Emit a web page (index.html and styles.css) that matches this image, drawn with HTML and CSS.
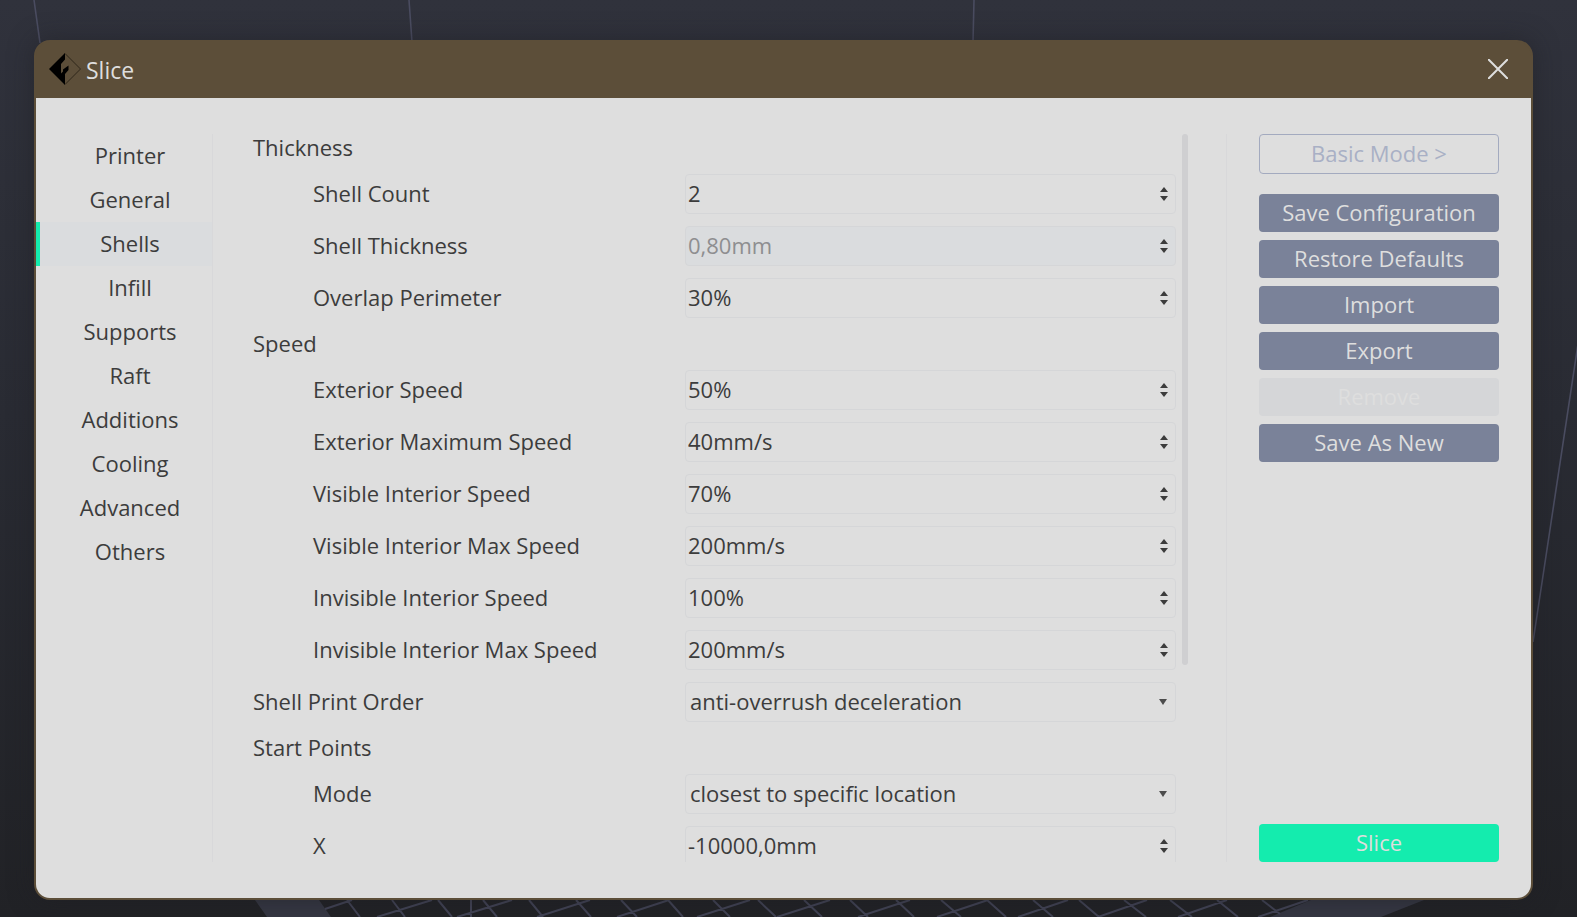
FILE: index.html
```html
<!DOCTYPE html>
<html lang="en">
<head>
<meta charset="utf-8">
<title>Slice</title>
<link rel="stylesheet" href="styles.css">
</head>
<body>
<svg class="scene" viewBox="0 0 1577 917" preserveAspectRatio="none" aria-hidden="true">
  <g fill="#353743">
    <path d="M255 900H319L331 917H267Z"/>
    <path d="M1311 900H1424L1381 917H1270Z"/>
  </g>
  <path fill="none" stroke="#4a4c60" stroke-width="1.6" d="M34 0L40 43M409 0L412 42M974 0L973 42M1578 344L1533 642"/>
  <path fill="none" stroke="#424456" stroke-width="2" d="M347 900l13 17M392 900l13 17M438 900l14 17M483 900l14 17M529 900l14 17M576 900l15 17M621 900l16 17M668 900l15 17M713 900l17 17M758 900l18 17M804 900l18 17M850 900l18 17M896 900l18 17M941 900l20 17M987 900l19 17M1033 900l20 17M1079 900l20 17M1124 900l22 17M1170 900l22 17M1217 900l21 17M1262 900l18 14M471 900v17M325 909L352 900M377 917l55-17M457 917l55-17M537 917l53-17M617 917l52-17M697 917l53-17M777 917l53-17M858 917l52-17M937 917l51-17M1018 917l50-17M1098 917l49-17M1178 917l49-17M1258 917l50-17"/>
</svg>
<main class="dialog">
  <header class="titlebar">
    <svg class="logo" viewBox="0 0 32 32" aria-hidden="true">
      <path d="M16 .5L31.500 16L16 31.500" fill="none" stroke="#2e261b" stroke-width="1"/>
      <path d="M16 0V6.500L12 11V20.500L14 18.500V16.500L19.500 12.500V17L16 21V32L0 16Z"/>
    </svg>
    <h1 class="title">Slice</h1>
    <button class="close" type="button" aria-label="Close">
      <svg viewBox="0 0 20 20"><path d="M.8 .8L19.200 19.200M19.200 .8L.8 19.200" fill="none" stroke="#dedede" stroke-width="2" stroke-linecap="round"/></svg>
    </button>
  </header>
  <div class="content">
    <nav class="tabs">
      <button type="button" class="tab">Printer</button>
      <button type="button" class="tab">General</button>
      <button type="button" class="tab active" aria-current="page">Shells</button>
      <button type="button" class="tab">Infill</button>
      <button type="button" class="tab">Supports</button>
      <button type="button" class="tab">Raft</button>
      <button type="button" class="tab">Additions</button>
      <button type="button" class="tab">Cooling</button>
      <button type="button" class="tab">Advanced</button>
      <button type="button" class="tab">Others</button>
    </nav>
    <form class="settings">
      <h2 class="group">Thickness</h2>
      <div class="row sub"><label for="count">Shell Count</label><span class="field"><input id="count" value="2"><span class="spin"><button type="button" class="up" aria-label="Increase"></button><button type="button" class="down" aria-label="Decrease"></button></span></span></div>
      <div class="row sub"><label for="thick">Shell Thickness</label><span class="field disabled"><input id="thick" value="0,80mm" disabled><span class="spin"><button type="button" class="up" aria-label="Increase"></button><button type="button" class="down" aria-label="Decrease"></button></span></span></div>
      <div class="row sub"><label for="overlap">Overlap Perimeter</label><span class="field"><input id="overlap" value="30%"><span class="spin"><button type="button" class="up" aria-label="Increase"></button><button type="button" class="down" aria-label="Decrease"></button></span></span></div>
      <h2 class="group">Speed</h2>
      <div class="row sub"><label for="ext">Exterior Speed</label><span class="field"><input id="ext" value="50%"><span class="spin"><button type="button" class="up" aria-label="Increase"></button><button type="button" class="down" aria-label="Decrease"></button></span></span></div>
      <div class="row sub"><label for="extmax">Exterior Maximum Speed</label><span class="field"><input id="extmax" value="40mm/s"><span class="spin"><button type="button" class="up" aria-label="Increase"></button><button type="button" class="down" aria-label="Decrease"></button></span></span></div>
      <div class="row sub"><label for="vis">Visible Interior Speed</label><span class="field"><input id="vis" value="70%"><span class="spin"><button type="button" class="up" aria-label="Increase"></button><button type="button" class="down" aria-label="Decrease"></button></span></span></div>
      <div class="row sub"><label for="vismax">Visible Interior Max Speed</label><span class="field"><input id="vismax" value="200mm/s"><span class="spin"><button type="button" class="up" aria-label="Increase"></button><button type="button" class="down" aria-label="Decrease"></button></span></span></div>
      <div class="row sub"><label for="inv">Invisible Interior Speed</label><span class="field"><input id="inv" value="100%"><span class="spin"><button type="button" class="up" aria-label="Increase"></button><button type="button" class="down" aria-label="Decrease"></button></span></span></div>
      <div class="row sub"><label for="invmax">Invisible Interior Max Speed</label><span class="field"><input id="invmax" value="200mm/s"><span class="spin"><button type="button" class="up" aria-label="Increase"></button><button type="button" class="down" aria-label="Decrease"></button></span></span></div>
      <div class="row"><label for="order">Shell Print Order</label><span class="field"><select id="order"><option>anti-overrush deceleration</option></select><span class="caret"></span></span></div>
      <h2 class="group">Start Points</h2>
      <div class="row sub"><label for="mode">Mode</label><span class="field"><select id="mode"><option>closest to specific location</option></select><span class="caret"></span></span></div>
      <div class="row sub"><label for="x">X</label><span class="field"><input id="x" value="-10000,0mm"><span class="spin"><button type="button" class="up" aria-label="Increase"></button><button type="button" class="down" aria-label="Decrease"></button></span></span></div>
    </form>
    <div class="scrollbar"><div class="thumb"></div></div>
    <aside class="actions">
      <button type="button" class="btn outline">Basic Mode &gt;</button>
      <button type="button" class="btn">Save Configuration</button>
      <button type="button" class="btn">Restore Defaults</button>
      <button type="button" class="btn">Import</button>
      <button type="button" class="btn">Export</button>
      <button type="button" class="btn" disabled>Remove</button>
      <button type="button" class="btn">Save As New</button>
      <button type="button" class="btn primary">Slice</button>
    </aside>
  </div>
</main>
</body>
</html>
```
FILE: styles.css
```css
* { box-sizing: border-box; }

body {
  margin: 0;
  height: 100vh;
  padding: 40px 44px 17px 34px;
  display: flex;
  background: linear-gradient(#30323c, #292b33 45%, #212226);
  color: #3c3c3c;
  font: 22px/28px "Open Sans", "Noto Sans", sans-serif;
}

button, input, select { font: inherit; color: inherit; }

button { border: 0; padding: 0; background: none; }

h1, h2 { margin: 0; font-weight: 400; }

.scene {
  position: absolute;
  inset: 0;
  width: 100%;
  height: 100%;
}

.dialog {
  position: relative;
  flex: 1;
  display: flex;
  flex-direction: column;
  min-width: 0;
  border: 2px solid #5c4e39;
  border-radius: 16px;
  background: #5c4e39;
  overflow: hidden;
  box-shadow: 0 0 24px rgba(30, 30, 34, 0.5);
}

.titlebar {
  flex: none;
  display: flex;
  align-items: center;
  height: 56px;
  padding: 0 23px 2px 13px;
  gap: 5px;
  color: #dedede;
}

.logo { width: 32px; height: 32px; }

.title { flex: 1; padding-top: 2px; font-size: 23px; }

.close { display: flex; }

.close svg { width: 20px; height: 20px; }

.content {
  flex: 1;
  display: flex;
  min-height: 0;
  padding: 36px 32px 36px 0;
  background: #dedede;
}

.tabs {
  width: 177px;
  display: flex;
  flex-direction: column;
  border-right: 1px solid #d8d8da;
}

.tab {
  height: 44px;
  padding: 0 0 2px 12px;
}

.tab.active {
  background: #dadcde;
  border-left: 4px solid #14ecae;
  padding-left: 8px;
}

.settings {
  flex: 1;
  display: flex;
  flex-direction: column;
  gap: 12px;
  padding-left: 40px;
  overflow: hidden;
}

.group {
  flex: none;
  padding-bottom: 2px;
  font-size: 22px;
  line-height: 26px;
}

.row {
  flex: none;
  display: grid;
  grid-template-columns: 432px 1fr;
  align-items: center;
}

.row label { padding-bottom: 2px; }

.sub label { padding-left: 60px; }

.field {
  display: flex;
  align-items: center;
  height: 40px;
  padding-right: 7px;
  border: 1px solid #d5d6d8;
  border-radius: 4px;
}

.field.disabled { background: #dadcde; }

.field input,
.field select {
  flex: 1;
  min-width: 0;
  height: 38px;
  border: 0;
  padding: 0 0 2px 2px;
  background: none;
  outline: 0;
  appearance: none;
}

.field select { padding-left: 4px; }

.field input:disabled { color: #8e8e90; }

.spin { display: flex; flex-direction: column; gap: 4px; }

.up, .down { width: 8px; height: 5px; background: #3c3c3c; }

.up { clip-path: polygon(50% 0, 100% 100%, 0 100%); }

.down { clip-path: polygon(0 0, 100% 0, 50% 100%); }

.caret {
  width: 8px;
  height: 6px;
  margin-right: 1px;
  background: #4c4c4c;
  clip-path: polygon(0 0, 100% 0, 50% 100%);
}

.scrollbar { width: 6px; margin: 0 38px 0 6px; }

.thumb { height: 73%; border-radius: 3px; background: #cfcfd1; }

.actions {
  width: 273px;
  display: flex;
  flex-direction: column;
  gap: 8px;
  padding-left: 32px;
  border-left: 1px solid #d8d8da;
}

.btn {
  height: 38px;
  padding-bottom: 2px;
  border-radius: 4px;
  background: #7a8299;
  color: #dedede;
}

.btn.outline {
  height: 40px;
  margin-bottom: 12px;
  border: 1px solid #a3aabf;
  background: none;
  color: #a9b0c5;
}

.btn:disabled { background: #d5d6d8; color: #dedede; }

.btn.primary { margin-top: auto; background: #14ecae; }
```
